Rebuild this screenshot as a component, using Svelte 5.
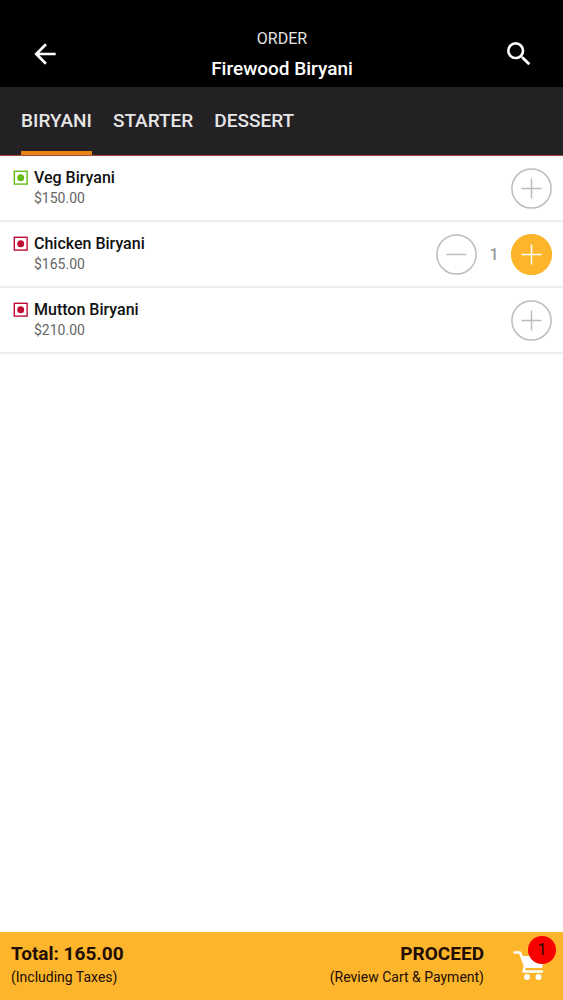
<script lang="ts">
  type Item = { id: number; name: string; price: number; veg: boolean }

  const tabs = ['BIRYANI', 'STARTER', 'DESSERT']
  const items: Item[] = [
    { id: 1, name: 'Veg Biryani', price: 150, veg: true },
    { id: 2, name: 'Chicken Biryani', price: 165, veg: false },
    { id: 3, name: 'Mutton Biryani', price: 210, veg: false },
  ]

  let active = $state('BIRYANI')
  let cart: Record<number, number> = $state({ 1: 0, 2: 1, 3: 0 })

  const total = $derived(items.reduce((sum, item) => sum + item.price * cart[item.id], 0))
  const count = $derived(items.reduce((sum, item) => sum + cart[item.id], 0))
  const visible = $derived(active === 'BIRYANI' ? items : [])
</script>

<div class="screen">
  <header>
    <button class="icon-button" aria-label="Back">
      <svg width="32" height="32" viewBox="0 0 24 24" fill="currentColor">
        <path d="M20 11H7.83l5.59-5.59L12 4l-8 8 8 8 1.41-1.41L7.83 13H20v-2z" />
      </svg>
    </button>
    <div class="heading">
      <span>ORDER</span>
      <h1>Firewood Biryani</h1>
    </div>
    <button class="icon-button" aria-label="Search">
      <svg width="32" height="32" viewBox="0 0 24 24" fill="currentColor">
        <path d="M15.5 14h-.79l-.28-.27A6.47 6.47 0 0 0 16 9.5 6.5 6.5 0 1 0 9.5 16c1.61 0 3.09-.59 4.23-1.57l.27.28v.79l5 4.99L20.49 19l-4.99-5zm-6 0C7.01 14 5 11.99 5 9.5S7.01 5 9.5 5 14 7.01 14 9.5 11.99 14 9.5 14z" />
      </svg>
    </button>
  </header>

  <nav>
    {#each tabs as tab}
      <button class:active={tab === active} onclick={() => (active = tab)}>{tab}</button>
    {/each}
  </nav>

  <ul>
    {#each visible as item (item.id)}
      <li>
        <svg class="mark" class:veg={item.veg} width="15" height="15" viewBox="0 0 15 15">
          <rect x="1.3" y="1.3" width="12.800" height="12.800" fill="none" stroke="currentColor" stroke-width="1.400" />
          <circle cx="7.700" cy="7.700" r="3.500" fill="currentColor" />
        </svg>
        <div class="info">
          <h2>{item.name}</h2>
          <p>${item.price.toFixed(2)}</p>
        </div>
        <div class="stepper">
          {#if cart[item.id] > 0}
            <button class="round" aria-label="Remove {item.name}" onclick={() => cart[item.id]--}>
              <svg width="41" height="41" viewBox="0 0 41 41" fill="none" stroke="currentColor" stroke-width="1.5">
                <circle class="ring" cx="20.5" cy="20.5" r="19.600" />
                <path d="M10.500 20.5h20" />
              </svg>
            </button>
            <span class="quantity">{cart[item.id]}</span>
          {/if}
          <button
            class="round"
            class:filled={cart[item.id] > 0}
            aria-label="Add {item.name}"
            onclick={() => cart[item.id]++}
          >
            <svg width="41" height="41" viewBox="0 0 41 41" fill="none" stroke="currentColor" stroke-width="1.5">
              <circle class="ring" cx="20.5" cy="20.5" r="19.600" />
              <path d="M10.500 20.5h20M20.5 10.500v20" />
            </svg>
          </button>
        </div>
      </li>
    {/each}
  </ul>

  <footer>
    <div class="total">
      <strong>Total: {total.toFixed(2)}</strong>
      <small>(Including Taxes)</small>
    </div>
    <button class="proceed">
      <span class="label">
        <strong>PROCEED</strong>
        <small>(Review Cart &amp; Payment)</small>
      </span>
      <span class="cart">
        <svg width="34" height="34" viewBox="0 0 34 34">
          <path d="M8 7h24l-3 12H13z" fill="#fff" />
          <path
            d="M1.500 3.500h5.500l5 13.500-1.500 5.500H29"
            fill="none"
            stroke="#fff"
            stroke-width="2.500"
            stroke-linecap="round"
            stroke-linejoin="round"
          />
          <circle cx="14" cy="28" r="3" fill="#fff" />
          <circle cx="25.500" cy="28" r="3" fill="#fff" />
        </svg>
        <span class="badge">{count}</span>
      </span>
    </button>
  </footer>
</div>

<style>
  :global(body) {
    margin: 0;
    background: #fff;
  }

  .screen {
    display: flex;
    flex-direction: column;
    min-height: 100vh;
    font-family: Roboto, 'Liberation Sans', sans-serif;
    color: #111;
  }

  button {
    padding: 0;
    border: 0;
    background: none;
    font: inherit;
    color: inherit;
    cursor: pointer;
  }

  svg {
    display: block;
  }

  h1,
  h2,
  p,
  ul {
    margin: 0;
    padding: 0;
  }

  header {
    display: flex;
    align-items: flex-start;
    justify-content: space-between;
    box-sizing: border-box;
    height: 87px;
    padding: 28px 28px 0 29px;
    background: #000;
    color: #fff;
  }

  .icon-button {
    padding: 10px 0 0;
  }

  .heading {
    text-align: center;
  }

  .heading span {
    display: block;
    font-size: 16px;
    line-height: 22px;
    color: #e4e4e4;
  }

  h1 {
    margin-top: 6px;
    font-size: 19px;
    font-weight: 500;
    line-height: 26px;
  }

  nav {
    display: flex;
    gap: 21px;
    height: 68px;
    padding: 0 21px;
    border-bottom: 1px solid #a8483c;
    background: #232124;
  }

  nav button {
    padding-top: 2px;
    border-bottom: 4px solid transparent;
    font-size: 19px;
    font-weight: 500;
    color: #e6e6e6;
  }

  nav .active {
    border-bottom-color: #e98318;
  }

  ul {
    flex: 1;
    list-style: none;
  }

  li {
    display: flex;
    align-items: flex-start;
    box-sizing: border-box;
    height: 66px;
    padding: 12px 11px 0 13px;
    border-bottom: 2px solid #eee;
  }

  .mark {
    flex: none;
    margin: 2px 6px 0 0;
    color: #c00c34;
  }

  .mark.veg {
    color: #63bd13;
  }

  .info {
    flex: 1;
    min-width: 0;
  }

  h2 {
    font-size: 16px;
    font-weight: 500;
    line-height: 20px;
  }

  .info p {
    font-size: 14px;
    line-height: 20px;
    color: #666;
  }

  .stepper {
    display: flex;
    align-items: center;
  }

  .round {
    border-radius: 50%;
    color: #bdbcc0;
  }

  .round.filled {
    background: #fdb52b;
    color: #fff;
  }

  .filled .ring {
    stroke: #fdb52b;
  }

  .quantity {
    width: 34px;
    font-size: 16px;
    font-weight: 500;
    text-align: center;
    color: #999;
  }

  footer {
    display: flex;
    align-items: flex-start;
    justify-content: space-between;
    box-sizing: border-box;
    height: 68px;
    padding: 10px 16px 0 11px;
    background: #fdb52b;
    color: #220d05;
  }

  strong,
  small {
    display: block;
  }

  strong {
    font-size: 19px;
    font-weight: 700;
    line-height: 24px;
  }

  small {
    font-size: 14px;
    line-height: 22px;
  }

  .proceed {
    display: flex;
    align-items: flex-start;
    gap: 29px;
  }

  .label {
    text-align: right;
  }

  .cart {
    position: relative;
    padding-top: 7px;
  }

  .badge {
    position: absolute;
    top: -6px;
    right: -9px;
    width: 28px;
    border-radius: 50%;
    background: #f90000;
    font-size: 16px;
    line-height: 28px;
    text-align: center;
  }
</style>
